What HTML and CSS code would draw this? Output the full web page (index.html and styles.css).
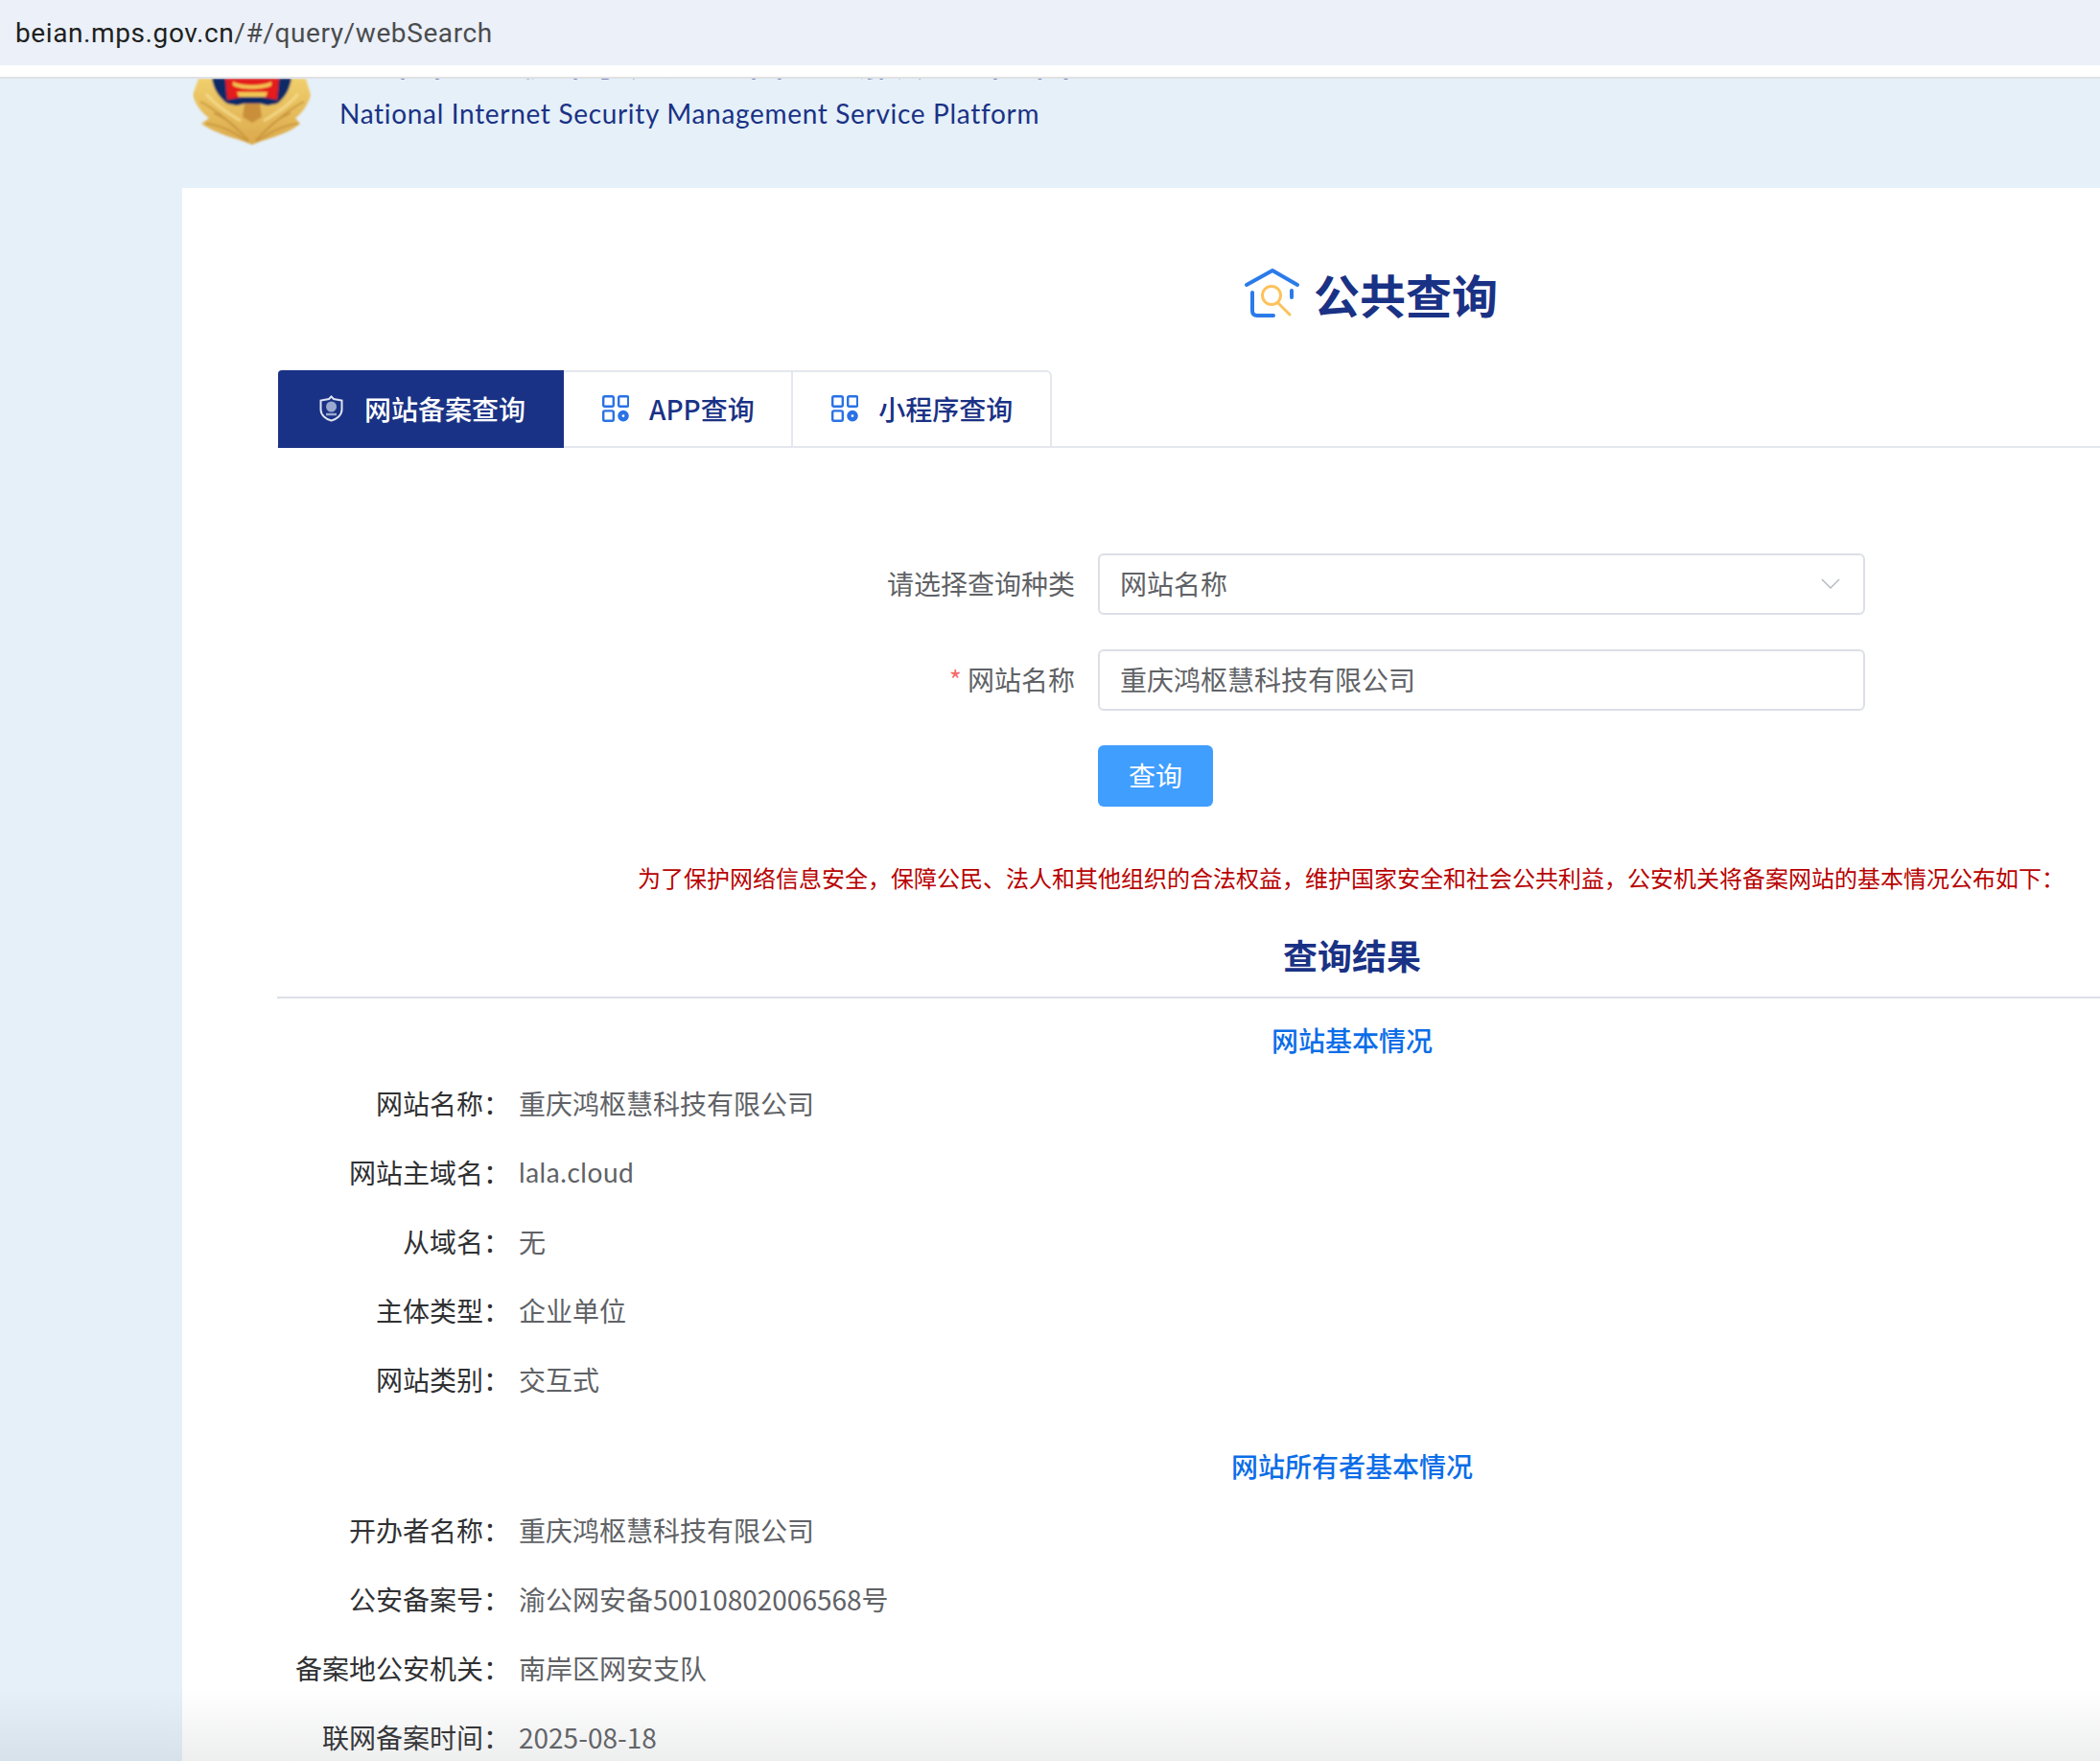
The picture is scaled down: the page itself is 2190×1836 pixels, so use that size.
FILE: index.html
```html
<!DOCTYPE html>
<html lang="zh-CN">
<head>
    <meta charset="UTF-8">
    <title>全国互联网安全管理服务平台</title>
    <link rel="stylesheet" href="styles.css">
</head>
<body>
    <div class="url-bar"><span class="url-host">beian.mps.gov.cn</span>/#/query/webSearch</div>
    <div class="browser-gap"></div>

    <header class="site-head">
        <svg class="emblem" width="124" height="70" viewBox="0 0 124 70">
            <defs>
                <filter id="soft"><feGaussianBlur stdDeviation="0.8"/></filter>
                <linearGradient id="gold" x1="0" y1="0" x2="0" y2="1">
                    <stop offset="0" stop-color="#f0cf6c"/>
                    <stop offset="1" stop-color="#dba94c"/>
                </linearGradient>
            </defs>
            <g filter="url(#soft)">
                <path d="M6 0H118L123 17C120 28 114 36 107 41L112 47C96 60 76 62 62 69C48 62 28 60 9 47L17 41C10 36 3 28 0 17Z" fill="url(#gold)"/>
                <path d="M20 0H103C101 12 96 20 88 26L78 28L70 26H54L46 28L36 26C28 20 22 12 20 0Z" fill="#0f2a66"/>
                <path d="M34 0H90L88 22L72 19H52L36 22Z" fill="#e41f1c"/>
                <path d="M42 3C50 8 74 8 82 3L82 7C74 12 50 12 42 7ZM46 14H78L76 19H48Z" fill="#f3c552"/>
                <path d="M54 26H70L72 40L62 46L52 40Z" fill="#c98f3a"/>
                <path d="M8 24C24 32 40 46 58 64M116 24C100 32 84 46 66 64M14 47C28 48 44 56 58 66M110 47C96 48 80 56 66 66M22 36C32 40 40 46 46 52M102 36C92 40 84 46 78 52" stroke="#b9812f" stroke-width="1.4" fill="none" opacity="0.7"/>
                <path d="M14 16C24 28 36 36 50 44M110 16C100 28 88 36 74 44" stroke="#f6dd8e" stroke-width="3" fill="none" opacity="0.8"/>
            </g>
        </svg>
        <div class="site-title">
            <div class="site-title-cn">全国互联网安全管理服务平台</div>
            <div class="site-title-en">National Internet Security Management Service Platform</div>
        </div>
    </header>

    <main class="card">
        <div class="query-title">
            <svg width="60" height="56" viewBox="6 5 60 56" fill="none" stroke-linecap="round" stroke-linejoin="round">
                <path d="M10 25L37 10L63 25" stroke="#2b7bea" stroke-width="4"/>
                <path d="M16 33V52Q16 57 21 57H38" stroke="#2b7bea" stroke-width="4"/>
                <path d="M57 31V38" stroke="#2b7bea" stroke-width="4"/>
                <circle cx="36" cy="36" r="9.5" stroke="#fcc25c" stroke-width="3"/>
                <path d="M43 44L55 56" stroke="#fcc25c" stroke-width="3"/>
            </svg>
            <h2>公共查询</h2>
        </div>

        <div class="tabs">
            <div class="tab active">
                <svg width="25" height="28" viewBox="0 0 25 28" fill="none">
                    <path d="M12.5 1.5L15 4L23.5 5.5V15C23.5 21 18 25 12.5 26.5C7 25 1.5 21 1.5 15V5.5L10 4Z" stroke="#dfe4f2" stroke-width="2"/>
                    <circle cx="12.5" cy="12" r="5.5" fill="#9ba9cf"/>
                    <path d="M7 20H18" stroke="#9ba9cf" stroke-width="2.5"/>
                </svg>
                网站备案查询
            </div>
            <div class="tab">
                <svg class="grid-icon" width="28" height="28" viewBox="0 0 28 28"><use href="#grid4"/></svg>
                APP查询
            </div>
            <div class="tab">
                <svg class="grid-icon" width="28" height="28" viewBox="0 0 28 28">
                    <defs>
                        <g id="grid4">
                            <rect x="1.2" y="1.2" width="10.6" height="10.6" rx="1.5" fill="none" stroke="#2a72e5" stroke-width="2.4"/>
                            <rect x="17.2" y="1.2" width="10" height="10.6" rx="1.5" fill="none" stroke="#2a72e5" stroke-width="2.4"/>
                            <rect x="1.2" y="16.4" width="10.6" height="10.4" rx="1.5" fill="none" stroke="#2a72e5" stroke-width="2.4"/>
                            <circle cx="22" cy="21.6" r="3.6" fill="none" stroke="#2a72e5" stroke-width="4.4"/>
                        </g>
                    </defs>
                    <use href="#grid4"/>
                </svg>
                小程序查询
            </div>
        </div>

        <form class="search-form">
            <label>请选择查询种类</label>
            <div class="field select-field">
                网站名称
                <svg width="20" height="11" viewBox="0 0 20 11" fill="none"><path d="M1 1L10 10L19 1" stroke="#b4b8bf" stroke-width="1.4"/></svg>
            </div>
            <label><span class="required">*</span> 网站名称</label>
            <div class="field">重庆鸿枢慧科技有限公司</div>
            <span></span>
            <div><button type="button" class="btn-query">查询</button></div>
        </form>

        <p class="notice">为了保护网络信息安全，保障公民、法人和其他组织的合法权益，维护国家安全和社会公共利益，公安机关将备案网站的基本情况公布如下：</p>

        <h3 class="result-title">查询结果</h3>

        <h4 class="section-title">网站基本情况</h4>
        <dl class="info">
            <dt>网站名称：</dt><dd>重庆鸿枢慧科技有限公司</dd>
            <dt>网站主域名：</dt><dd class="latin">lala.cloud</dd>
            <dt>从域名：</dt><dd>无</dd>
            <dt>主体类型：</dt><dd>企业单位</dd>
            <dt>网站类别：</dt><dd>交互式</dd>
        </dl>

        <h4 class="section-title second">网站所有者基本情况</h4>
        <dl class="info">
            <dt>开办者名称：</dt><dd>重庆鸿枢慧科技有限公司</dd>
            <dt>公安备案号：</dt><dd>渝公网安备50010802006568号</dd>
            <dt>备案地公安机关：</dt><dd>南岸区网安支队</dd>
            <dt>联网备案时间：</dt><dd>2025-08-18</dd>
        </dl>
    </main>

    <div class="bottom-fade"></div>
</body>
</html>
```

FILE: styles.css
```css
* { box-sizing: border-box; }

html, body {
    margin: 0;
    height: 1836px;
    overflow: hidden;
}

body {
    position: relative;
    font-family: Lato, "Noto Sans CJK SC", sans-serif;
    font-size: 28px;
    color: #606266;
    background-color: #e5f0f9;
}

.url-bar {
    height: 68px;
    padding-left: 16px;
    line-height: 70px;
    font-family: Roboto, sans-serif;
    font-size: 28px;
    letter-spacing: 0.6px;
    color: #4b4c4e;
    background-color: #ebf0f9;
}

.url-host { color: #1e1f20; }

.browser-gap {
    height: 14px;
    background-color: #fff;
    border-bottom: 2px solid #e0e2e4;
}

.site-head {
    display: flex;
    gap: 29px;
    height: 114px;
    padding-left: 201px;
    overflow: hidden;
}

.emblem { flex: none; }

.site-title { margin-top: -50px; color: #1a3285; }

.site-title-cn {
    height: 50px;
    font-family: "Noto Sans CJK SC", sans-serif;
    font-size: 48px;
    line-height: 50px;
    letter-spacing: 12px;
    white-space: nowrap;
}

.site-title-en {
    margin-top: 16px;
    line-height: 40px;
    letter-spacing: 0.68px;
    white-space: nowrap;
}

.card {
    width: 2440px;
    margin-left: 190px;
    padding: 76px 99px 0;
    background-color: #fff;
    font-family: "Noto Sans CJK SC", sans-serif;
}

.query-title {
    display: flex;
    align-items: center;
    justify-content: center;
    gap: 14px;
    height: 68px;
    padding-left: 38px;
}

.query-title svg { margin-bottom: 3px; }

.query-title h2 {
    margin: 0;
    font-size: 48px;
    font-weight: 700;
    color: #1a3285;
}

.tabs {
    display: flex;
    height: 81px;
    margin-top: 46px;
    padding-left: 1px;
    border-bottom: 2px solid #e4e7ed;
}

.tab {
    display: flex;
    align-items: center;
    gap: 21px;
    padding: 0 38.5px 4px 40px;
    height: 81px;
    color: #1a3285;
    font-weight: 500;
    white-space: nowrap;
    border-top: 2px solid #e4e7ed;
    border-right: 2px solid #e4e7ed;
}

.tab:last-child { border-top-right-radius: 6px; }

.tab.active {
    width: 298px;
    padding-left: 43px;
    padding-right: 0;
    gap: 22px;
    color: #fff;
    background-color: #1a3285;
    border-color: #1a3285;
    border-top-left-radius: 4px;
}

.search-form {
    display: grid;
    grid-template-columns: 832px 800px;
    column-gap: 24px;
    row-gap: 36px;
    align-items: center;
    margin-top: 110px;
}

.search-form label { padding-bottom: 2px; text-align: right; }

.required { color: #f56c6c; font-size: 28px; }

.field {
    display: flex;
    align-items: center;
    height: 64px;
    padding: 0 21px 2px;
    border: 2px solid #dcdfe6;
    border-radius: 6px;
}

.select-field { justify-content: space-between; padding-right: 24px; }

.btn-query {
    display: block;
    width: 120px;
    height: 64px;
    padding: 0 0 2px;
    font-family: inherit;
    font-size: 28px;
    color: #fff;
    background-color: #409eff;
    border: none;
    border-radius: 6px;
}

.notice {
    margin: 56px 0 0 376px;
    font-size: 24px;
    line-height: 36px;
    color: #b80000;
    white-space: nowrap;
}

.result-title {
    margin: 35px 0 0;
    height: 73px;
    font-size: 36px;
    line-height: 54px;
    font-weight: 700;
    text-align: center;
    color: #1a3285;
    border-bottom: 2px solid #dcdfe6;
}

.section-title {
    margin: 22px 0 0;
    font-size: 28px;
    line-height: 42px;
    font-weight: 500;
    text-align: center;
    color: #0b6de8;
}

.section-title.second { margin: 33px 0 10px; }

.info {
    display: grid;
    grid-template-columns: 243px 1fr;
    grid-auto-rows: 72px;
    column-gap: 9px;
    align-items: center;
    margin: 9px 0 0;
}

.info dt { text-align: right; color: #303133; }

.info dd { margin: 0; }

.info dd.latin { font-family: Lato, sans-serif; letter-spacing: 0.55px; }

.bottom-fade {
    position: absolute;
    left: 0;
    right: 0;
    bottom: 0;
    height: 76px;
    background: linear-gradient(rgba(120, 125, 130, 0), rgba(120, 125, 130, 0.13));
}
```
